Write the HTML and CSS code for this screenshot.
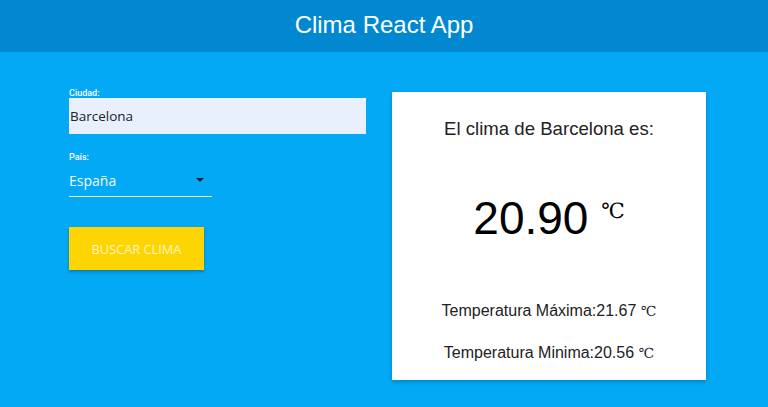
FILE: index.html
```html
<!DOCTYPE html>
<html lang="es">
<head>
<meta charset="utf-8">
<title>Clima React App</title>
<link rel="stylesheet" href="styles.css">
</head>
<body>
<header class="topbar">
  <h1 class="brand">Clima React App</h1>
</header>
<main class="content">
  <form class="search">
    <div class="field">
      <label class="field-label" for="ciudad">Ciudad:</label>
      <input class="text-input" id="ciudad" type="text" value="Barcelona">
    </div>
    <div class="field field-select">
      <span class="field-label">País:</span>
      <div class="select">
        <span class="select-value">España</span>
        <svg class="caret" width="8" height="4" viewBox="0 0 8 4"><path d="M0 0h8L4 4z" fill="#0b2236"/></svg>
      </div>
    </div>
    <button class="btn" type="button">BUSCAR CLIMA</button>
  </form>
  <section class="card">
    <h2 class="card-title">El clima de Barcelona es:</h2>
    <p class="temp">20.90 <span class="deg-big">℃</span></p>
    <p class="minmax">Temperatura Máxima:21.67 <span class="deg">℃</span></p>
    <p class="minmax">Temperatura Minima:20.56 <span class="deg">℃</span></p>
  </section>
</main>
</body>
</html>
```
FILE: styles.css
```css
* { box-sizing: border-box; }
html, body { margin: 0; padding: 0; }
body {
  background: #03a9f4;
  font-family: "Liberation Sans", Arial, sans-serif;
  height: 407px;
  overflow: hidden;
}
.topbar {
  height: 52px;
  background: #0288d1;
  display: flex;
  align-items: center;
  justify-content: center;
}
.brand {
  margin: 0;
  color: #fff;
  font-weight: normal;
  font-size: 24px;
  line-height: 28px;
  padding-bottom: 3px;
}
.content {
  display: flex;
  gap: 26px;
  padding: 36px 0 0 69px;
}
.search {
  width: 297px;
  display: flex;
  flex-direction: column;
}
.field-label {
  display: block;
  color: #fff;
  font-family: Roboto, "Noto Sans", sans-serif;
  font-size: 9px;
  font-weight: 500;
  line-height: 10px;
  height: 10px;
}
.text-input {
  display: block;
  width: 297px;
  height: 36px;
  margin: 0;
  border: 0;
  padding: 0 0 0 1px;
  background: #e8f0fe;
  color: #222;
  font-family: "Open Sans", "Noto Sans", sans-serif;
  font-size: 13.5px;
  outline: none;
}
.field-select { margin-top: 18px; }
.select {
  width: 143px;
  height: 35px;
  border-bottom: 1px solid #e3f2fd;
  display: flex;
  align-items: center;
  justify-content: space-between;
  padding: 0 8px 0 0;
}
.select-value {
  color: #f1f8fe;
  font-family: "Open Sans", "Noto Sans", sans-serif;
  font-size: 14px;
  padding-top: 3px;
}
.caret { margin-top: 1px; }
.btn {
  margin-top: 30px;
  width: 135px;
  height: 43px;
  border: 0;
  background: #fdd503;
  color: #fff4c0;
  font-family: "Open Sans", "Noto Sans", sans-serif;
  font-size: 12.8px;
  box-shadow: 0 2px 3px rgba(0, 0, 0, 0.25);
  padding: 0;
}
.card {
  margin-top: 4px;
  width: 314px;
  height: 288px;
  background: #fff;
  box-shadow: 0 2px 4px rgba(0, 0, 0, 0.22);
  text-align: center;
  color: #222;
  padding-top: 26px;
}
.card-title {
  margin: 0;
  font-weight: normal;
  font-size: 18.6px;
  line-height: 22px;
}
.temp {
  margin: 45px 0 0;
  font-size: 46px;
  line-height: 52px;
  color: #000;
}
.deg-big {
  font-family: "Liberation Serif", "DejaVu Serif", serif;
  font-size: 21px;
  vertical-align: 16px;
}
.minmax {
  margin: 0;
  font-size: 16px;
  line-height: 20px;
}
.temp + .minmax { margin-top: 57px; }
.minmax + .minmax { margin-top: 21px; }
.deg {
  font-family: "Liberation Serif", "DejaVu Serif", serif;
  font-size: 14px;
}
```
